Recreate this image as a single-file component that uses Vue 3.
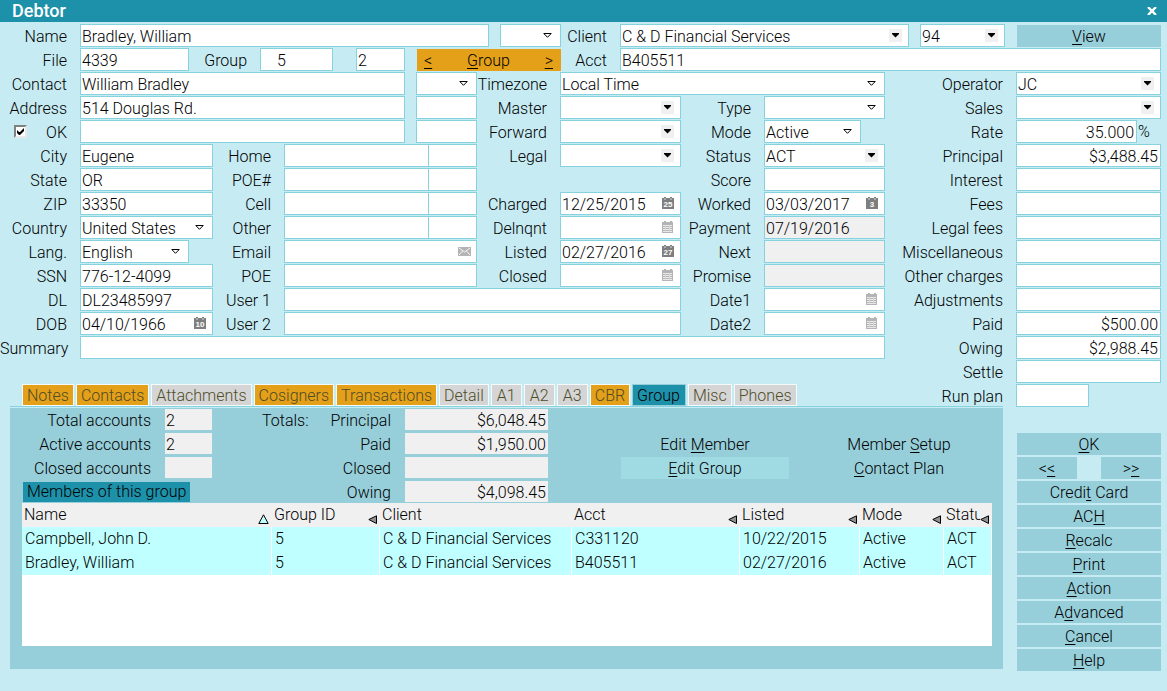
<script setup>
const text = (id, label, value = '', extra = {}) => ({ kind: 'text', id, label, value, ...extra })
const pick = (id, label, value = '', extra = {}) => ({ kind: 'select', arrow: 'hollow', id, label, value, ...extra })
const list = (id, label, value = '', extra = {}) => pick(id, label, value, { arrow: 'solid', ...extra })
const date = (id, label, value = '', day = '', extra = {}) => text(id, label, value, { calendar: true, day, ...extra })
const money = (id, label, value = '') => text(id, label, value, { size: 'amount' })

const groups = [
  {
    name: 'head-left',
    lines: [
      [text('name', 'Name', 'Bradley, William'), pick('salutation', '', '', { aria: 'Salutation', size: 'w61 spaced' })],
      [
        text('file', 'File', '4339', { size: 'w109' }),
        text('group', 'Group', '5', { size: 'w73 indented', labelSize: 'l71' }),
        text('group-count', '', '2', { aria: 'Group count', size: 'w49 far' }),
        { kind: 'pager', id: 'pager' },
      ],
    ],
  },
  {
    name: 'head-right',
    lines: [
      [
        list('client', 'Client', 'C & D Financial Services'),
        list('client-no', '', '94', { aria: 'Client number', size: 'w85 spaced' }),
        { kind: 'button', id: 'view', caption: '_View' },
      ],
      [text('acct', 'Acct', 'B405511')],
    ],
  },
  {
    name: 'contact',
    lines: [
      [text('contact', 'Contact', 'William Bradley'), pick('contact-kind', '', '', { aria: 'Contact kind', size: 'w61 spaced' })],
      [text('address', 'Address', '514 Douglas Rd.'), text('unit', '', '', { aria: 'Unit', size: 'w61 spaced' })],
      [{ kind: 'check', id: 'addr-ok' }, text('address2', '', '', { aria: 'Address line 2' }), text('unit2', '', '', { aria: 'Unit 2', size: 'w61 spaced' })],
    ],
  },
  {
    name: 'person',
    lines: [
      [text('city', 'City', 'Eugene')],
      [text('state', 'State', 'OR')],
      [text('zip', 'ZIP', '33350')],
      [pick('country', 'Country', 'United States')],
      [pick('lang', 'Lang.', 'English', { size: 'short' })],
      [text('ssn', 'SSN', '776-12-4099')],
      [text('dl', 'DL', 'DL23485997')],
      [date('dob', 'DOB', '04/10/1966', '10')],
    ],
  },
  {
    name: 'phones',
    lines: [
      ...['Home', 'POE#', 'Cell', 'Other'].map((label, i) => [
        text('phone' + i, label),
        text('ext' + i, '', '', { aria: label + ' extension', size: 'w49 joined' }),
      ]),
      [text('email', 'Email', '', { mail: true })],
      [text('poe', 'POE')],
    ],
  },
  { name: 'user', lines: [[text('user1', 'User 1')], [text('user2', 'User 2')]] },
  { name: 'zone', lines: [[pick('timezone', 'Timezone', 'Local Time')]] },
  {
    name: 'handling',
    lines: [
      [list('master', 'Master')],
      [list('forward', 'Forward')],
      [list('legal', 'Legal')],
      [],
      [date('charged', 'Charged', '12/25/2015', '25')],
      [date('delnqnt', 'Delnqnt')],
      [date('listed', 'Listed', '02/27/2016', '27')],
      [date('closed', 'Closed')],
    ],
  },
  {
    name: 'progress',
    lines: [
      [pick('type', 'Type')],
      [pick('mode', 'Mode', 'Active', { size: 'short' })],
      [list('status', 'Status', 'ACT')],
      [text('score', 'Score')],
      [date('worked', 'Worked', '03/03/2017', '3')],
      [text('payment', 'Payment', '07/19/2016', { readonly: true })],
      [text('next', 'Next', '', { readonly: true })],
      [text('promise', 'Promise', '', { readonly: true })],
      [date('date1', 'Date1')],
      [date('date2', 'Date2')],
    ],
  },
  { name: 'summary', lines: [[text('summary', 'Summary')]] },
  {
    name: 'finance',
    lines: [
      [list('operator', 'Operator', 'JC')],
      [list('sales', 'Sales')],
      [text('rate', 'Rate', '35.000', { size: 'amount', unit: '%' })],
      [money('principal', 'Principal', '$3,488.45')],
      [money('interest', 'Interest')],
      [money('fees', 'Fees')],
      [money('legal-fees', 'Legal fees')],
      [money('misc', 'Miscellaneous')],
      [money('other', 'Other charges')],
      [money('adjust', 'Adjustments')],
      [money('paid', 'Paid', '$500.00')],
      [money('owing', 'Owing', '$2,988.45')],
      [money('settle', 'Settle')],
      [text('plan', 'Run plan', '', { size: 'half' })],
    ],
  },
]

const tabs = [
  ['Notes', 'set'], ['Contacts', 'set'], ['Attachments', ''], ['Cosigners', 'set'], ['Transactions', 'set'],
  ['Detail', ''], ['A1', ''], ['A2', ''], ['A3', ''], ['CBR', 'set'], ['Group', 'active'], ['Misc', ''], ['Phones', ''],
]

const counts = [['Total accounts', '2'], ['Active accounts', '2'], ['Closed accounts', '']]
const totals = [['Principal', '$6,048.45'], ['Paid', '$1,950.00'], ['Closed', ''], ['Owing', '$4,098.45']]
const panelActions = [['Edit _Member', ''], ['Member _Setup', ''], ['_Edit Group', 'lit'], ['_Contact Plan', '']]

const columns = [
  ['Name', 'c-name', 'up'], ['Group ID', 'c-gid', 'side'], ['Client', 'c-client', ''], ['Acct', 'c-acct', 'side'],
  ['Listed', 'c-listed', 'side'], ['Mode', 'c-mode', 'side'], ['Status', 'c-status', 'side'],
]
const members = [
  ['Campbell, John D.', '5', 'C & D Financial Services', 'C331120', '10/22/2015', 'Active', 'ACT'],
  ['Bradley, William', '5', 'C & D Financial Services', 'B405511', '02/27/2016', 'Active', 'ACT'],
]

const actions = [
  ['_OK'], ['<_<', '>_>'], ['Credi_t Card'], ['AC_H'], ['_Recalc'], ['_Print'], ['_Action'], ['A_dvanced'], ['_Cancel'], ['_Help'],
]

function key(caption) {
  const at = caption.indexOf('_')
  return [caption.slice(0, at), caption[at + 1], caption.slice(at + 2)]
}
</script>

<template>
  <div class="window">
    <header class="titlebar">
      <h1>Debtor</h1>
      <button type="button" class="close" aria-label="Close">
        <svg width="10" height="8" viewBox="0 0 10 8"><path d="M1 0l8 8M9 0l-8 8" stroke="#fff" stroke-width="2.4" /></svg>
      </button>
    </header>

    <form class="form" @submit.prevent>
      <section v-for="g in groups" :key="g.name" class="group" :class="g.name">
        <div v-for="(line, n) in g.lines" :key="n" class="line">
          <template v-for="c in line" :key="c.id">
            <span v-if="c.kind === 'pager'" class="pager">
              <button type="button"><u>&lt;</u></button>
              <button type="button"><u>G</u>roup</button>
              <button type="button"><u>&gt;</u></button>
            </span>
            <button v-else-if="c.kind === 'button'" type="button" class="btn view">
              {{ key(c.caption)[0] }}<u>{{ key(c.caption)[1] }}</u>{{ key(c.caption)[2] }}
            </button>
            <label v-else-if="c.kind === 'check'" class="label check">
              <span class="tick">
                <input type="checkbox" checked />
                <svg width="7" height="7" viewBox="0 0 7 7"><path d="M0 2v3l2 2h1l4-4V0L3 4H2z" /></svg>
              </span>
              OK
            </label>
            <template v-else>
              <label v-if="c.label" class="label" :class="c.labelSize" :for="c.id">{{ c.label }}</label>
              <span class="field" :class="[c.size, { readonly: c.readonly }]">
                <select v-if="c.kind === 'select'" :id="c.id" :aria-label="c.aria">
                  <option>{{ c.value }}</option>
                </select>
                <input v-else :id="c.id" type="text" :value="c.value" :readonly="c.readonly" :aria-label="c.aria" />
                <svg v-if="c.arrow === 'hollow'" class="mark hollow" width="9" height="5" viewBox="0 0 9 5">
                  <path d="M0.8 0.5h7.4L4.5 4.3z" fill="none" stroke="#000" />
                </svg>
                <svg v-if="c.arrow === 'solid'" class="mark solid" width="13" height="13" viewBox="0 0 13 13">
                  <path d="M0 0h13v13H0z" fill="#f0f0f0" /><path d="M3 4h7v1L6.500 8.500 3 5z" />
                </svg>
                <svg v-if="c.calendar" class="mark calendar" width="12" height="12" viewBox="0 0 12 12">
                  <template v-if="c.day">
                    <path d="M0 1h2V0h2v1h4V0h2v1h2v11H0z" fill="#7e7e7e" />
                    <path d="M2 2h2M8 2h2" stroke="#d8d8d8" />
                    <text x="6" y="10" text-anchor="middle">{{ c.day }}</text>
                  </template>
                  <template v-else>
                    <path d="M0 1h2V0h2v1h4V0h2v1h1v11H0z" fill="#b4b4b4" />
                    <path d="M1 4.500h9M1 6.500h9M1 8.500h9M1 10.500h9" stroke="#ececec" fill="none" />
                    <path d="M3.500 4v7M7.500 4v7" stroke="#d8d8d8" fill="none" />
                  </template>
                </svg>
                <svg v-if="c.mail" class="mark mail" width="13" height="9" viewBox="0 0 13 9">
                  <path d="M0 0h13v9H0z" fill="#b4b4b4" />
                  <path d="M1 1l5.500 4L12 1M1 8l3.500-4M12 8L8.500 4" stroke="#f4f4f4" fill="none" />
                </svg>
              </span>
              <span v-if="c.unit" class="unit">{{ c.unit }}</span>
            </template>
          </template>
        </div>
      </section>
      <nav class="tabs" role="tablist">
        <button v-for="[name, state] in tabs" :key="name" type="button" role="tab" :class="state" :aria-selected="state === 'active'">{{ name }}</button>
      </nav>
    </form>

    <div class="lower">
      <main class="panel">
        <div class="overview">
          <div class="counts">
            <div v-for="([label, value], i) in counts" :key="label" class="line">
              <label class="label" :for="'count' + i">{{ label }}</label>
              <input :id="'count' + i" class="plain" type="text" readonly :value="value" />
            </div>
            <h2>Members of this group</h2>
          </div>
          <p class="caption">Totals:</p>
          <div class="totals">
            <div v-for="([label, value], i) in totals" :key="label" class="line">
              <label class="label" :for="'total' + i">{{ label }}</label>
              <input :id="'total' + i" class="plain amount" type="text" readonly :value="value" />
            </div>
          </div>
          <div class="panel-actions">
            <button v-for="[caption, state] in panelActions" :key="caption" type="button" class="btn" :class="state">
              {{ key(caption)[0] }}<u>{{ key(caption)[1] }}</u>{{ key(caption)[2] }}
            </button>
          </div>
        </div>
        <div class="members">
          <table>
            <thead>
              <tr>
                <th v-for="[name, cls, sort] in columns" :key="name" :class="cls" scope="col">
                  {{ name }}
                  <svg v-if="sort === 'up'" class="sort" width="11" height="10" viewBox="0 0 11 10">
                    <path d="M5.500 0.800L0.800 9.500h9.400z" fill="#c0ffff" stroke="#000" />
                  </svg>
                  <svg v-if="sort === 'side'" class="sort" width="9" height="9" viewBox="0 0 9 9">
                    <path d="M0.800 4.500L8.500 0.800v7.700z" fill="#909090" stroke="#000" />
                  </svg>
                </th>
              </tr>
            </thead>
            <tbody>
              <tr v-for="m in members" :key="m[3]">
                <td v-for="(v, i) in m" :key="i">{{ v }}</td>
              </tr>
            </tbody>
          </table>
        </div>
      </main>
      <aside class="actions">
        <div v-for="(row, i) in actions" :key="i" class="action-row">
          <button v-for="caption in row" :key="caption" type="button" class="btn">
            {{ key(caption)[0] }}<u>{{ key(caption)[1] }}</u>{{ key(caption)[2] }}
          </button>
        </div>
      </aside>
    </div>
  </div>
</template>

<style>
body {
  background: #c6ebf3;
}
</style>

<style scoped>
.window {
  min-height: 100vh;
  box-sizing: border-box;
  background: #c6ebf3;
  color: #000;
  font: 300 16px/22px Roboto, "Liberation Sans", sans-serif;
}
.window * {
  box-sizing: border-box;
}
button,
input,
select {
  margin: 0;
  padding: 0;
  border: 0;
  border-radius: 0;
  background: none;
  color: inherit;
  font: inherit;
}
u {
  text-decoration: underline;
  text-decoration-thickness: 1px;
  text-underline-offset: 2px;
  text-decoration-skip-ink: none;
}
.titlebar {
  display: flex;
  justify-content: space-between;
  align-items: center;
  height: 22px;
  padding: 0 10px 0 12px;
  background: #1e91aa;
  color: #fff;
}
.titlebar h1 {
  margin: 0;
  font-size: 18px;
  font-weight: 500;
  line-height: 22px;
}
.close {
  display: flex;
}
.form {
  display: grid;
  grid-template-columns: minmax(0, 213fr) minmax(0, 264fr) minmax(0, 84fr) minmax(0, 120fr) minmax(0, 204fr) minmax(0, 276fr);
  grid-auto-rows: 24px;
  padding: 2px 6px 0 0;
}
.head-left { grid-area: 1 / 1 / span 2 / 4; --label: 80px; }
.head-right { grid-area: 1 / 4 / span 2 / 7; --label: 59px; }
.contact { grid-area: 3 / 1 / span 3 / 3; --label: 80px; }
.person { grid-area: 6 / 1 / span 8 / 2; --label: 80px; }
.phones { grid-area: 6 / 2 / span 6 / 3; --label: 71px; }
.user { grid-area: 12 / 2 / span 2 / 5; --label: 71px; }
.zone { grid-area: 3 / 3 / span 1 / 6; --label: 83px; }
.handling { grid-area: 4 / 3 / span 8 / 5; --label: 83px; }
.progress { grid-area: 4 / 5 / span 10 / 6; --label: 83px; }
.summary { grid-area: 14 / 1 / span 1 / 6; --label: 80px; }
.finance { grid-area: 3 / 6 / span 14 / 7; --label: 131px; }
.tabs { grid-area: 16 / 1 / span 1 / 6; }

.line {
  display: flex;
  height: 24px;
}
.label {
  flex: none;
  width: var(--label);
  padding-right: 13px;
  line-height: 26px;
  text-align: right;
  white-space: nowrap;
}
.l71 { width: 71px; }
.summary .label { padding-right: 12px; }
.check {
  display: flex;
  justify-content: space-between;
  padding-left: 14px;
}
.tick {
  position: relative;
  width: 13px;
}
.tick input {
  display: block;
  width: 13px;
  height: 13px;
  margin-top: 5px;
  appearance: none;
  background: #fff;
  border: 2px solid;
  border-color: #808080 #e8e8e8 #e8e8e8 #808080;
}
.tick svg {
  position: absolute;
  left: 3px;
  top: 8px;
}
.field {
  position: relative;
  display: flex;
  flex: 1;
  min-width: 0;
  height: 23px;
  border: 1px solid #86d2df;
  background: #fff;
}
.field input,
.field select {
  flex: 1;
  width: 100%;
  min-width: 0;
  padding: 2px 1px 0;
  line-height: 19px;
  appearance: none;
  outline: 0;
}
.readonly { background: #f0f0f0; }
.w49 { flex: 0 0 49px; }
.w61 { flex: 0 0 61px; }
.w73 { flex: 0 0 73px; }
.w85 { flex: 0 0 85px; }
.w109 { flex: 1 1 109px; }
.spaced { margin-left: 11px; }
.far { margin-left: 23px; }
.joined { margin-left: -1px; }
.short { margin-right: 24px; }
.half { margin-right: 72px; }
.field.indented input { padding-left: 16px; }
.field.amount input { padding-right: 2px; text-align: right; }
.unit {
  width: 24px;
  padding-left: 1px;
  line-height: 24px;
}
.mark {
  position: absolute;
  pointer-events: none;
}
.hollow { right: 8px; top: 8px; }
.solid { right: 6px; top: 4px; }
.calendar { right: 6px; top: 4px; }
.mail { right: 5px; top: 6px; }
.calendar text {
  fill: #fff;
  font: 700 8px "Liberation Sans", sans-serif;
}
.pager {
  display: flex;
  flex: 0 0 144px;
  justify-content: space-between;
  height: 22px;
  margin: 1px 0 0 12px;
  padding: 1px 8px 0 7px;
  background: #e4a018;
}
.btn {
  height: 22px;
  padding-top: 2px;
  background: #96ced9;
  line-height: 20px;
  text-align: center;
  white-space: nowrap;
}
.view {
  flex: 0 0 144px;
  margin: 1px 0 0 12px;
}
.tabs {
  display: flex;
  gap: 2px;
  padding-left: 22px;
}
.tabs button {
  height: 22px;
  padding: 2px 4px 0;
  border: 1px solid #f4fbfc;
  background: #d5d5d5;
  color: #4f4c28;
  line-height: 18px;
  min-width: 31px;
}
.tabs .set { background: #e4a018; }
.tabs .active {
  padding-right: 5px;
  background: #1e91aa;
  color: #000;
  border-color: #96ced9;
}
.lower {
  display: grid;
  grid-template-columns: minmax(0, 1fr) 144px;
  align-items: start;
  gap: 14px;
  padding: 0 6px 20px 10px;
}
.panel {
  padding: 1px 11px 23px 12px;
  background: #96ced9;
  box-shadow: 0 -1px #c6ebf3, 0 -2px #86d2df;
}
.overview {
  display: flex;
  height: 94px;
}
.counts { --label: 143px; width: 190px; }
.totals { --label: 83px; width: 226px; }
.overview .line .label {
  padding-right: 14px;
  line-height: 24px;
}
.caption {
  width: 60px;
  margin: 0 0 0 50px;
  line-height: 24px;
}
.plain {
  flex: 1;
  min-width: 0;
  height: 21px;
  padding: 2px 2px 0 1px;
  background: #f0f0f0;
}
.plain.amount { text-align: right; }
h2 {
  display: inline-block;
  height: 20px;
  margin: 0 0 0 1px;
  padding: 0 4px;
  background: #1e91aa;
  font-size: 16px;
  font-weight: 300;
  line-height: 20px;
  white-space: nowrap;
}
.panel-actions {
  display: grid;
  flex: 1;
  grid-template-columns: 168px 168px;
  grid-auto-rows: 22px;
  justify-content: end;
  gap: 2px 26px;
  padding: 24px 9px 0 0;
}
.lit { background: #a0dbe4; }
.members {
  min-height: 143px;
  background: #fff;
}
table {
  width: 100%;
  table-layout: fixed;
  border-collapse: separate;
  border-spacing: 0;
}
th,
td {
  position: relative;
  height: 24px;
  padding: 0 0 0 3px;
  overflow: hidden;
  font-weight: 300;
  line-height: 24px;
  text-align: left;
  white-space: nowrap;
}
th { background: #f0f0f0; padding-left: 2px; }
td { background: #c0ffff; border-right: 1px solid #fff; }
.sort {
  position: absolute;
  right: 0;
  bottom: 3px;
  box-sizing: content-box;
  border-right: 3px solid #f0f0f0;
  background: #f0f0f0;
}
.c-gid { width: 108px; }
.c-client { width: 192px; }
.c-acct { width: 168px; }
.c-listed { width: 120px; }
.c-mode { width: 84px; }
.c-status { width: 48px; }
.c-status .sort {
  bottom: 0;
  padding: 12px 0 3px;
}
.actions { padding-top: 25px; }
.action-row {
  display: flex;
  gap: 24px;
  height: 24px;
}
.action-row .btn { flex: 1; }
</style>
